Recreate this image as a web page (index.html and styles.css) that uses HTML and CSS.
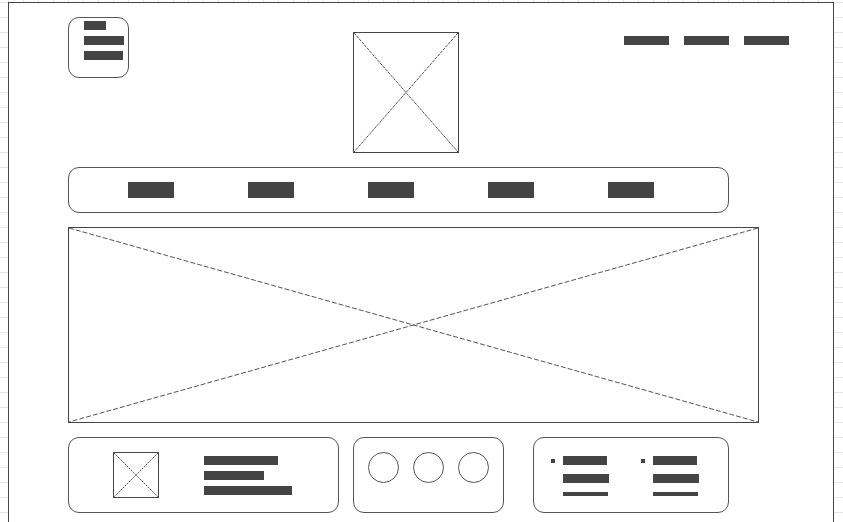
FILE: index.html
```html
<!DOCTYPE html>
<html lang="en">

<head>
    <meta name="viewport" content="width=device-width, initial-scale=1.0">
    <title>Wireframe</title>

    <link rel="stylesheet" href="styles.css">
</head>

<body>
    <!-- Folha do wireframe -->
    <div class="folha">

        <!-- Cabeçalho: logo, imagem e links -->
        <div class="cabecalho">
            <div class="logo">
                <span class="barra b22"></span>
                <span class="barra b40"></span>
                <span class="barra b39"></span>
            </div>

            <div class="imagem imagem-topo">
                <svg viewBox="0 0 100 100" preserveAspectRatio="none">
                    <line x1="0" y1="0" x2="100" y2="100" vector-effect="non-scaling-stroke"/>
                    <line x1="100" y1="0" x2="0" y2="100" vector-effect="non-scaling-stroke"/>
                </svg>
            </div>

            <div class="links-topo">
                <span class="barra"></span>
                <span class="barra"></span>
                <span class="barra"></span>
            </div>
        </div>

        <!-- Menu principal -->
        <div class="menu">
            <span class="item"></span>
            <span class="item"></span>
            <span class="item"></span>
            <span class="item"></span>
            <span class="item"></span>
        </div>

        <!-- Banner -->
        <div class="imagem banner">
            <svg viewBox="0 0 100 100" preserveAspectRatio="none">
                <line x1="0" y1="0" x2="100" y2="100" vector-effect="non-scaling-stroke"/>
                <line x1="100" y1="0" x2="0" y2="100" vector-effect="non-scaling-stroke"/>
            </svg>
        </div>

        <!-- Cartões de baixo -->
        <div class="cartoes">
            <div class="cartao cartao-texto">
                <div class="imagem miniatura">
                    <svg viewBox="0 0 100 100" preserveAspectRatio="none">
                        <line x1="0" y1="0" x2="100" y2="100" vector-effect="non-scaling-stroke"/>
                        <line x1="100" y1="0" x2="0" y2="100" vector-effect="non-scaling-stroke"/>
                    </svg>
                </div>
                <div class="linhas">
                    <span class="barra b74"></span>
                    <span class="barra b60"></span>
                    <span class="barra b88"></span>
                </div>
            </div>

            <div class="cartao cartao-circulos">
                <span class="circulo"></span>
                <span class="circulo"></span>
                <span class="circulo"></span>
            </div>

            <div class="cartao cartao-lista">
                <div class="coluna">
                    <div class="linha-lista"><span class="ponto"></span><span class="barra b44"></span></div>
                    <span class="barra b46"></span>
                    <span class="barra fina"></span>
                </div>
                <div class="coluna">
                    <div class="linha-lista"><span class="ponto"></span><span class="barra b44"></span></div>
                    <span class="barra b46"></span>
                    <span class="barra fina"></span>
                </div>
            </div>
        </div>

    </div>
</body>

</html>
```

FILE: styles.css
```css
*{
    padding: 0;
    margin: 0;
    box-sizing: border-box;
}

body{
    width: 843px;
    height: 522px;
    overflow: hidden;
    background-color: white;
    background-image:
        linear-gradient(to bottom, #e6e6e6 1px, transparent 1px),
        linear-gradient(to right, #e6e6e6 1px, transparent 1px);
    background-size: 15px 15px;
    background-position: 8px 2px;
}

.folha{
    margin: 2px 0 0 8px;
    width: 826px;
    height: 540px;
    background-color: white;
    border: 1px solid #444;
    padding: 14px 0 0 59px;
}

.barra{
    display: block;
    height: 9px;
    background-color: #444;
}

/* cabeçalho */
.cabecalho{
    display: flex;
    align-items: flex-start;
    height: 135px;
}

.logo{
    width: 61px;
    height: 61px;
    border: 1px solid #555;
    border-radius: 11px;
    padding: 3px 0 0 15px;
    display: flex;
    flex-direction: column;
    gap: 6px;
}

.b22{ width: 22px; }
.b40{ width: 40px; }
.b39{ width: 39px; }

.imagem{
    border: 1px solid #444;
    position: relative;
}

.imagem svg{
    display: block;
    width: 100%;
    height: 100%;
}

.imagem svg line{
    stroke: #555;
    stroke-width: 1;
    stroke-dasharray: 5 2;
}

.imagem-topo{
    width: 106px;
    height: 121px;
    margin: 15px 0 0 224px;
}

.imagem-topo svg line{
    stroke-dasharray: 3 1;
}

.links-topo{
    display: flex;
    gap: 15px;
    margin: 19px 0 0 165px;
}

.links-topo .barra{
    width: 45px;
}

/* menu */
.menu{
    width: 661px;
    height: 46px;
    margin-top: 15px;
    border: 1px solid #555;
    border-radius: 11px;
    display: flex;
    gap: 74px;
    padding: 14px 0 0 59px;
}

.menu .item{
    display: block;
    width: 46px;
    height: 16px;
    background-color: #444;
}

/* banner */
.banner{
    width: 691px;
    height: 196px;
    margin-top: 14px;
}

/* cartões */
.cartoes{
    display: flex;
    gap: 14px;
    margin-top: 14px;
}

.cartao{
    height: 76px;
    border: 1px solid #555;
    border-radius: 11px;
}

.cartao-texto{
    width: 271px;
    display: flex;
    align-items: flex-start;
    padding: 14px 0 0 44px;
}

.miniatura{
    width: 46px;
    height: 46px;
}

.miniatura svg line{
    stroke-dasharray: 2 1;
}

.linhas{
    display: flex;
    flex-direction: column;
    gap: 6px;
    margin: 4px 0 0 45px;
}

.b74{ width: 74px; }
.b60{ width: 60px; }
.b88{ width: 88px; }
.b44{ width: 44px; }
.b46{ width: 46px; }

.cartao-circulos{
    width: 151px;
    display: flex;
    gap: 14px;
    padding: 14px 0 0 14px;
}

.circulo{
    display: block;
    width: 31px;
    height: 31px;
    border: 1px solid #555;
    border-radius: 50%;
}

.cartao-lista{
    width: 196px;
    margin-left: 15px;
    display: flex;
    gap: 32px;
    padding: 18px 0 0 17px;
}

.coluna{
    display: flex;
    flex-direction: column;
    gap: 9px;
}

.coluna > .barra{
    margin-left: 12px;
}

.linha-lista{
    display: flex;
    align-items: center;
    gap: 8px;
}

.ponto{
    display: block;
    width: 4px;
    height: 4px;
    background-color: #444;
}

.coluna .fina{
    width: 45px;
    height: 4px;
}
```
